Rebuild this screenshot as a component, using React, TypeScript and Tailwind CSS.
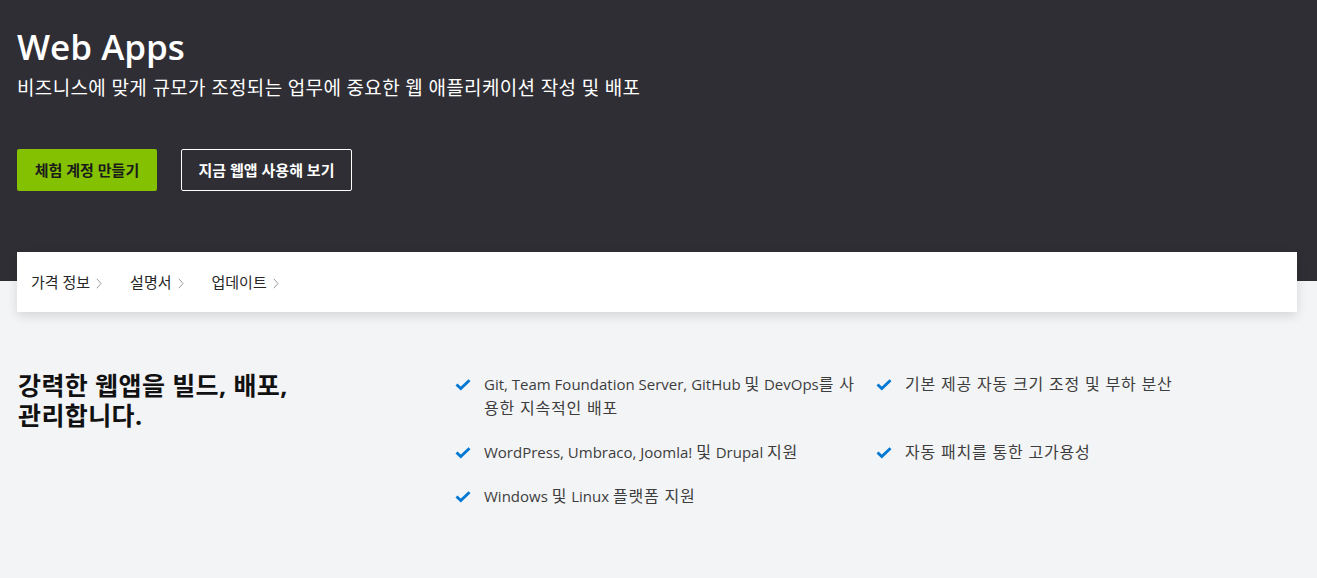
import React from "react";

const font = { fontFamily: '"Segoe UI", "Open Sans", "Noto Sans CJK KR", sans-serif' };

const Check = () => (
  <svg width="16" height="12" viewBox="0 0 16 12" className="mt-[7px] shrink-0">
    <path d="M1.5 5.5 L5.8 9.6 L14.5 1.2" fill="none" stroke="#0078d4" strokeWidth="2.8" />
  </svg>
);

const Chevron = () => (
  <svg width="6" height="11" viewBox="0 0 6 11" className="ml-[6px] mt-[3px]">
    <path d="M0.8 0.8 L5 5.5 L0.8 10.2" fill="none" stroke="#9a9a9a" strokeWidth="1" />
  </svg>
);

// hangul runs are set a little larger to match the reference's wider Korean face
const K = ({ children }: { children: React.ReactNode }) => (
  <span className="text-[16px] leading-6 tracking-[0.8px]">{children}</span>
);

const NavLink = ({ label }: { label: string }) => (
  <a href="#" className="flex items-center text-[15px] text-[#262626]">
    {label}
    <Chevron />
  </a>
);

const Item = ({ children }: { children: React.ReactNode }) => (
  <li className="flex gap-[13px] pr-[12px]">
    <Check />
    <span className="text-[15px] leading-6 text-[#3d3d3d]">{children}</span>
  </li>
);

export default function App() {
  return (
    <div className="min-h-[578px] bg-[#f3f4f6]" style={font}>
      <section className="bg-[#2f2e34] px-[17px] pt-[24px] pb-[90px] text-white">
        <h1 className="text-[35px] font-semibold leading-[46px]">Web Apps</h1>
        <p className="mt-[6px] text-[19px] leading-6 tracking-[0.35px]">
          비즈니스에 맞게 규모가 조정되는 업무에 중요한 웹 애플리케이션 작성 및 배포
        </p>
        <div className="mt-[49px] flex gap-6">
          <button className="h-[42px] w-[140px] rounded-[2px] bg-[#84c100] text-[15px] font-semibold text-[#1b1b1b]">
            체험 계정 만들기
          </button>
          <button className="h-[42px] w-[171px] rounded-[2px] border border-white text-[15px] font-semibold text-white">
            지금 웹앱 사용해 보기
          </button>
        </div>
      </section>

      <nav className="relative ml-[17px] mr-[20px] -mt-[29px] flex h-[60px] items-center gap-[28px] bg-white px-[14px] shadow-[0_4px_10px_rgba(0,0,0,0.12)]">
        <NavLink label="가격 정보" />
        <NavLink label="설명서" />
        <NavLink label="업데이트" />
      </nav>

      <section className="flex px-[18px] pt-[58px]">
        <h2 className="w-[437px] text-[25px] font-bold leading-[30px] tracking-[0.4px] text-[#111]">
          강력한 웹앱을 빌드, 배포,
          <br />
          관리합니다.
        </h2>
        <ul className="mt-[2px] grid grid-cols-[421px_421px] gap-y-5">
          <Item>
            Git, Team Foundation Server, GitHub <K>및</K> DevOps<K>를 사용한 지속적인 배포</K>
          </Item>
          <Item>
            <K>기본 제공 자동 크기 조정 및 부하 분산</K>
          </Item>
          <Item>
            WordPress, Umbraco, Joomla! <K>및</K> Drupal <K>지원</K>
          </Item>
          <Item>
            <K>자동 패치를 통한 고가용성</K>
          </Item>
          <Item>
            Windows <K>및</K> Linux <K>플랫폼 지원</K>
          </Item>
        </ul>
      </section>
    </div>
  );
}
